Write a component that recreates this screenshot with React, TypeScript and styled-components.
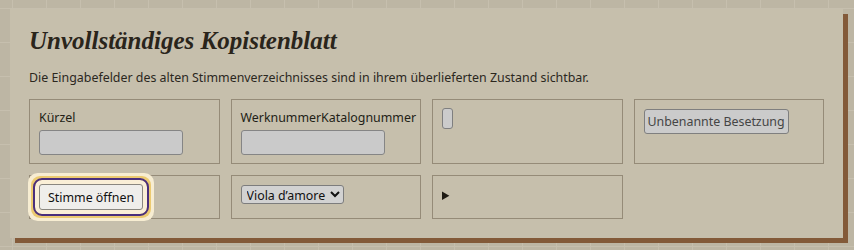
import styled, { createGlobalStyle } from "styled-components"

const Global = createGlobalStyle`
html, body {
margin: 0;
padding: 0;
}
body {
width: 854px;
height: 250px;
overflow: hidden;
background-color: #bdb6a4;
background-image:
  linear-gradient(to right, #c6bfae 1px, transparent 1px),
  linear-gradient(to bottom, #c6bfae 1px, transparent 1px);
background-size: 34px 34px;
background-position: 12px 8px;
font-family: "Noto Sans", "DejaVu Sans", sans-serif;
color: #2b271e;
}
`;

const App = () =>{
    return(
        <div>
            <Global />
            <Page>
                <Sheet>
                    <Title>Unvollständiges Kopistenblatt</Title>
                    <Intro>Die Eingabefelder des alten Stimmenverzeichnisses sind in ihrem überlieferten Zustand sichtbar.</Intro>
                    <Grid>
                        <Field>
                            <Label>Kürzel</Label>
                            <Input type="text" />
                        </Field>
                        <Field>
                            <Label>WerknummerKatalognummer</Label>
                            <Input type="text" />
                        </Field>
                        <Field>
                            <EmptyButton type="button" />
                        </Field>
                        <Field>
                            <GrayButton type="button">Unbenannte Besetzung</GrayButton>
                        </Field>
                        <Field>
                            <FocusButton type="button">Stimme öffnen</FocusButton>
                        </Field>
                        <Field>
                            <Select defaultValue="viola">
                                <option value="viola">Viola d’amore</option>
                            </Select>
                        </Field>
                        <Field>
                            <Details>
                                <summary></summary>
                            </Details>
                        </Field>
                    </Grid>
                </Sheet>
            </Page>
        </div>
    )
}

export default App


const Details = styled.details`
font-size: 13px;
line-height: 18px;
padding-top: 2px;
summary {
  cursor: pointer;
  color: #1f1b14;
}
`;
const Select = styled.select`
display: block;
font-family: "Noto Sans", sans-serif;
font-size: 12.4px;
color: #111;
height: 19px;
padding: 0 1px;
margin-top: 1px;
background: #d2d2d2;
border: 1px solid #7d7d7d;
border-radius: 3px;
`;
const FocusButton = styled.button`
font-family: "Noto Sans", sans-serif;
font-size: 12.4px;
color: #111;
height: 26px;
padding: 0 8px;
background: #efeeeb;
border: 1px solid #8a8780;
border-radius: 3px;
outline: 2px solid #4a2f7c;
outline-offset: 4px;
box-shadow:
  0 0 0 4px #faefd7,
  0 0 0 8px #ecca70,
  0 0 0 11px #f7edd2;
`;
const GrayButton = styled.button`
font-family: "Noto Sans", sans-serif;
font-size: 12.4px;
color: #454545;
height: 25px;
padding: 0 3px;
margin-top: 1px;
background: #cbcbcb;
border: 1px solid #7f7f7f;
border-radius: 3px;
`;
const EmptyButton = styled.button`
width: 11px;
height: 21px;
padding: 0;
background: #cbcbcb;
border: 1px solid #7f7f7f;
border-radius: 3px;
`;
const Input = styled.input`
display: block;
box-sizing: border-box;
width: 144px;
height: 25px;
background: #cacaca;
border: 1px solid #858585;
border-radius: 3px;
`;
const Label = styled.label`
display: block;
font-size: 12.4px;
line-height: 20px;
margin-bottom: 2px;
color: #221e16;
`;
const Field = styled.div`
min-width: 0;
border: 1px solid #958b78;
padding: 8px 9px;
`;
const Grid = styled.div`
display: grid;
grid-template-columns: repeat(4, minmax(0, 1fr));
gap: 11px 11px;
`;
const Intro = styled.p`
font-size: 12.4px;
line-height: 18px;
margin: 0 0 12px;
`;
const Title = styled.h1`
font-family: "Liberation Serif", "Times New Roman", serif;
font-style: italic;
font-weight: 700;
font-size: 25px;
line-height: 28px;
margin: 0 0 14px;
color: #2a251b;
`;
const Sheet = styled.div`
width: 833px;
box-sizing: border-box;
padding: 18px 19px 19px;
background: #c6bfac;
box-shadow: 5px 5px 0 #835a39;
`;
const Page = styled.div`
padding: 9px 0 0 10px;
`;
